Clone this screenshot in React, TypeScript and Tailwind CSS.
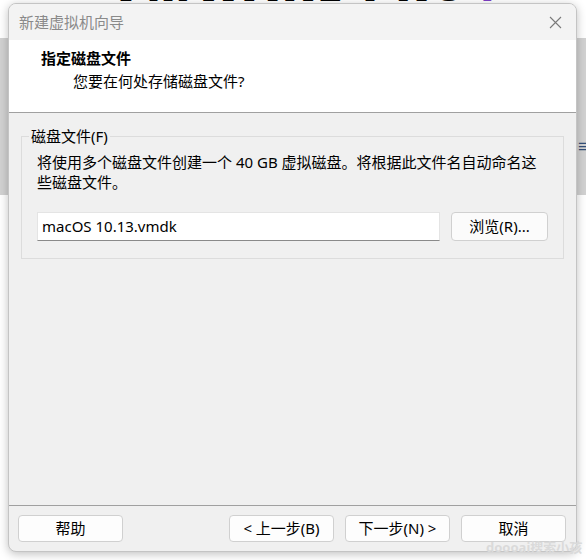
const font = { fontFamily: '"Noto Sans", "Noto Sans CJK SC", sans-serif' };

const DialogButton = ({ label }: { label: string }) => (
  <button className="w-[105px] h-[27px] rounded-[4px] border border-[#d0d0d0] bg-[#fdfdfd] text-[15px] text-black leading-none">
    {label}
  </button>
);

export default function App() {
  return (
    <div className="relative w-[586px] h-[560px] overflow-hidden bg-white" style={font}>
      {/* desktop behind the dialog */}
      <div className="absolute left-0 right-0 top-[38px] h-[157px] bg-[#d2d2d2]" />
      <div className="absolute left-[110px] top-[-40px] text-[46px] font-black tracking-[4px] text-black leading-none whitespace-nowrap">
        VMWARE PRO
        <span className="ml-[12px] text-[#7b3fc4]">/</span>
      </div>
      <div className="absolute left-[577px] top-[140px] text-[13px] font-bold text-[#34507a] leading-none">
        ≡
      </div>

      {/* dialog window */}
      <div className="relative ml-[8px] mt-[3px] w-[569px] h-[549px] flex flex-col rounded-[8px] overflow-hidden border border-[#c4c4c4] bg-[#f0f0f0] shadow-[0_2px_10px_rgba(0,0,0,0.25)]">
        <div className="h-[36px] shrink-0 bg-[#f3f3f3] flex items-center justify-between pl-[10px] pr-[14px]">
          <span className="text-[15px] text-[#8a8a8a]">新建虚拟机向导</span>
          <svg width="13" height="13" viewBox="0 0 13 13">
            <path d="M1 1 L12 12 M12 1 L1 12" stroke="#7a7a7a" strokeWidth="1.1" fill="none" />
          </svg>
        </div>

        <div className="h-[73px] shrink-0 bg-white border-b border-[#a0a0a0] pl-[32px] pt-[8px]">
          <div className="text-[15px] font-bold text-black leading-[20px]">指定磁盘文件</div>
          <div className="text-[15px] text-black leading-[20px] pl-[32px] mt-[3px]">您要在何处存储磁盘文件?</div>
        </div>

        <div className="flex-1 px-[12px] pt-[13px]">
          <fieldset className="border border-[#dcdcdc] px-[15px] pb-[17px]">
            <legend className="ml-[-8px] px-[2px] text-[15px] text-black leading-[20px]">磁盘文件(F)</legend>
            <div className="mt-[6px] text-[15px] text-black leading-[20px]">
              将使用多个磁盘文件创建一个 40 GB 虚拟磁盘。将根据此文件名自动命名这
              <br />
              些磁盘文件。
            </div>
            <div className="mt-[20px] flex items-center gap-[11px]">
              <div className="w-[403px] h-[29px] bg-white border border-[#e4e4e4] border-b-[#8a8a8a] flex items-center pl-[4px] text-[15px] text-black">
                macOS 10.13.vmdk
              </div>
              <button className="w-[97px] h-[29px] rounded-[4px] border border-[#d0d0d0] bg-[#fbfbfb] text-[15px] text-black">
                浏览(R)...
              </button>
            </div>
          </fieldset>
        </div>

        <div className="h-[46px] shrink-0 border-t border-[#a0a0a0] pt-[9px] pl-[9px] pr-[10px] flex items-start justify-between">
          <DialogButton label="帮助" />
          <div className="flex gap-[11px]">
            <DialogButton label="< 上一步(B)" />
            <DialogButton label="下一步(N) >" />
            <DialogButton label="取消" />
          </div>
        </div>
      </div>

      <div className="absolute left-[486px] top-[541px] text-[13px] font-bold text-[#dadada] leading-none whitespace-nowrap">
        doooai搜索小孩
      </div>
    </div>
  );
}
